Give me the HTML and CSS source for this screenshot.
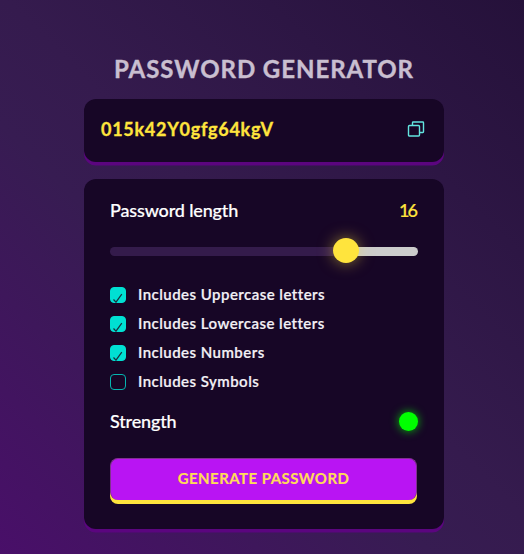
FILE: index.html
```html
<!DOCTYPE html>
<html lang="en">
<head>
<meta charset="utf-8">
<title>Password Generator</title>
<link rel="stylesheet" href="styles.css">
</head>
<body>
<main class="generator">
  <h1 class="title">PASSWORD GENERATOR</h1>
  <section class="card output">
    <span class="password">015k42Y0gfg64kgV</span>
    <svg class="copy" viewBox="0 0 18 18" fill="none" stroke="#63e5e0" stroke-width="1.4"><rect x="1.5" y="5.5" width="11" height="10.5" rx="1"/><path d="M5.5 5V2.7Q5.5 2 6.2 2H15.8Q16.5 2 16.5 2.7V11.8Q16.5 12.5 15.8 12.5H13"/></svg>
  </section>
  <section class="card settings">
    <div class="row"><span class="label length">Password length</span><span class="label value">16</span></div>
    <div class="slider"><div class="thumb"></div></div>
    <ul class="options">
      <li class="option"><span class="box checked"><svg viewBox="0 0 16 16"><path d="M3.5 12.5L6 15.2L11.8 7.2"/></svg></span><span class="text">Includes Uppercase letters</span></li>
      <li class="option"><span class="box checked"><svg viewBox="0 0 16 16"><path d="M3.5 12.5L6 15.2L11.8 7.2"/></svg></span><span class="text">Includes Lowercase letters</span></li>
      <li class="option"><span class="box checked"><svg viewBox="0 0 16 16"><path d="M3.5 12.5L6 15.2L11.8 7.2"/></svg></span><span class="text">Includes Numbers</span></li>
      <li class="option"><span class="box"></span><span class="text">Includes Symbols</span></li>
    </ul>
    <div class="row strength"><span class="label">Strength</span><span class="dot"></span></div>
    <button class="generate">GENERATE PASSWORD</button>
  </section>
</main>
</body>
</html>
```
FILE: styles.css
```css
* { box-sizing: border-box; }
body {
  margin: 0;
  height: 554px;
  overflow: hidden;
  font-family: Lato, "Liberation Sans", sans-serif;
  background: linear-gradient(45deg, #490f69 0%, #371c52 40%, #351b4e 52%, #25113a 100%);
}
.generator { width: 360px; margin-left: 84px; padding-top: 53px; }
.title {
  margin: 0 0 16px;
  height: 30px;
  line-height: 31px;
  font-size: 24px;
  font-weight: 700;
  letter-spacing: 0.95px;
  text-align: center;
  white-space: nowrap;
  color: #c9bfd0;
  -webkit-text-stroke: 0.4px #c9bfd0;
}
.card { background: #170626; border-radius: 12px; box-shadow: 0 3.5px 0 #5b057f; }
.output {
  height: 62.5px;
  padding: 0 19px 2px 17px;
  display: flex;
  align-items: center;
  justify-content: space-between;
}
.password { font-size: 18px; font-weight: 700; letter-spacing: 0.72px; color: #ffe43d; -webkit-text-stroke: 0.3px #ffe43d; }
.copy { width: 18px; height: 18px; }
.settings { margin-top: 17.5px; height: 349.5px; padding: 20px 26px 0; }
.row { display: flex; align-items: center; justify-content: space-between; height: 24px; }
.label { font-size: 18px; font-weight: 500; line-height: 24px; padding-bottom: 2px; letter-spacing: -0.15px; color: #fff; -webkit-text-stroke: 0.2px #fff; }
.value { color: #ffe43d; letter-spacing: -2px; padding-right: 2px; -webkit-text-stroke-color: #ffe43d; }
.slider {
  height: 9px;
  margin-top: 24px;
  border-radius: 5px;
  background: linear-gradient(to right, #341b4b 76%, #ccc 76%);
}
.thumb {
  position: relative;
  top: -9px;
  left: 223px;
  width: 26px;
  height: 25px;
  border-radius: 50%;
  background: #ffe43d;
  box-shadow: 0 0 15px rgba(255, 228, 61, 0.5);
}
.options { list-style: none; margin: 25px 0 0; padding: 0; }
.option { display: flex; align-items: center; gap: 12px; height: 28.8px; }
.box { width: 16px; height: 16px; border: 1px solid #05b5b0; border-radius: 4px; flex: none; }
.checked { background: #00e0d3; border-color: #00e0d3; }
.checked svg { display: block; width: 16px; height: 16px; margin: -1px; fill: none; stroke: #17323e; stroke-width: 1.2; }
.text { font-size: 15px; font-weight: 600; letter-spacing: 0.46px; line-height: 20px; padding-bottom: 2px; color: #f3f0f5; white-space: nowrap; -webkit-text-stroke: 0.2px #f3f0f5; }
.strength { margin-top: 13.8px; }
.dot { width: 19px; height: 19px; border-radius: 50%; background: #0f0; box-shadow: 0 0 10px rgba(0, 255, 0, 0.75); }
.generate {
  display: block;
  width: 307px;
  height: 42px;
  margin-top: 24px;
  padding: 0 0 3px;
  border: 1px solid #80318f;
  border-bottom: 0;
  border-radius: 8px;
  background: #b914f3;
  box-shadow: 0 4px 0 #ffe43d;
  color: #ffdb58;
  font: 700 15px Lato, "Liberation Sans", sans-serif;
  letter-spacing: 0.45px;
  -webkit-text-stroke: 0.2px #ffdb58;
}
```
